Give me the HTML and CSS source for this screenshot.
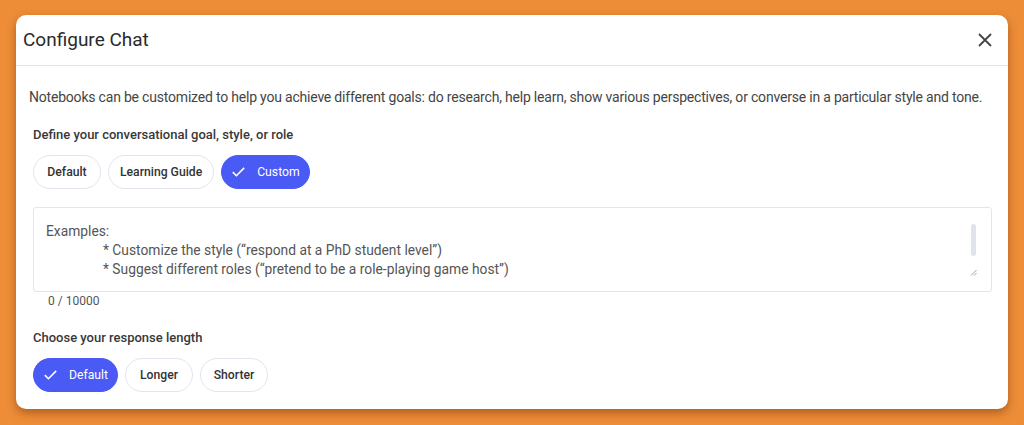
FILE: index.html
```html
<!DOCTYPE html>
<html lang="en">

<head>
    <meta charset="UTF-8">
    <meta name="viewport" content="width=device-width, initial-scale=1.0">
    <title>Configure Chat</title>
    <link rel="stylesheet" href="styles.css">
</head>

<body>

    <div class="dialog">
        <div class="dialog-head">
            <h1>Configure Chat</h1>
            <span class="close">
                <svg width="14" height="14" viewBox="0 0 14 14">
                    <path d="M1 1L13 13M13 1L1 13" stroke="#444" stroke-width="1.8" fill="none" />
                </svg>
            </span>
        </div>

        <div class="dialog-body">
            <p class="intro">Notebooks can be customized to help you achieve different goals: do research, help learn, show various perspectives, or converse in a particular style and tone.</p>

            <p class="label">Define your conversational goal, style, or role</p>
            <div class="chips">
                <span class="chip">Default</span>
                <span class="chip">Learning Guide</span>
                <span class="chip on">
                    <svg width="13" height="10" viewBox="0 0 13 10">
                        <path d="M0.8 5.1L4.4 8.7L12.2 0.9" stroke="#fff" stroke-width="1.6" fill="none" />
                    </svg>
                    Custom
                </span>
            </div>

            <div class="prompt">
                <div class="prompt-text">
                    <div>Examples:</div>
                    <div class="indent">* Customize the style (“respond at a PhD student level”)</div>
                    <div class="indent">* Suggest different roles (“pretend to be a role-playing game host”)</div>
                </div>
                <div class="scroll"></div>
                <svg class="grip" width="7" height="7" viewBox="0 0 7 7">
                    <path d="M6.5 1L1 6.5M6.5 4L4 6.5" stroke="#999" stroke-width="0.9" />
                </svg>
            </div>
            <p class="count">0 / 10000</p>

            <p class="label">Choose your response length</p>
            <div class="chips">
                <span class="chip on">
                    <svg width="13" height="10" viewBox="0 0 13 10">
                        <path d="M0.8 5.1L4.4 8.7L12.2 0.9" stroke="#fff" stroke-width="1.6" fill="none" />
                    </svg>
                    Default
                </span>
                <span class="chip">Longer</span>
                <span class="chip">Shorter</span>
            </div>
        </div>
    </div>

</body>

</html>
```

FILE: styles.css
```css
* {
    margin: 0;
    padding: 0;
    box-sizing: border-box;
}

body {
    width: 1024px;
    height: 425px;
    overflow: hidden;
    background-color: #ee8d37;
    font-family: Roboto, "Liberation Sans", Arial, sans-serif;
    color: #3c3c3c;
    padding: 15px 16px 0 16px;
}

.dialog {
    width: 992px;
    height: 394px;
    background-color: #fff;
    border-radius: 10px;
    box-shadow: 0 4px 10px rgba(90, 40, 0, 0.45);
}

.dialog-head {
    height: 51px;
    border-bottom: 1px solid #e3e3e6;
    display: flex;
    align-items: center;
    justify-content: space-between;
    padding: 0 16px 0 7px;
}

.dialog-head h1 {
    font-size: 19px;
    font-weight: 400;
    color: #2a2a2a;
    margin-top: -2px;
}

.close {
    display: flex;
    margin-top: -1px;
}

.dialog-body {
    padding: 0 16px 0 17px;
}

.intro {
    font-size: 14px;
    letter-spacing: -0.2px;
    color: #454545;
    margin: 21px 0 0 -4px;
    line-height: 20px;
    white-space: nowrap;
}

.label {
    font-size: 13px;
    font-weight: 500;
    color: #383838;
    margin-top: 20px;
    line-height: 16px;
}

.chips {
    display: flex;
    gap: 7px;
    margin-top: 12px;
}

.chip {
    height: 34px;
    min-width: 68px;
    padding: 0 11px;
    border: 1px solid #e4e4ee;
    border-radius: 17px;
    font-size: 12.2px;
    font-weight: 500;
    color: #333;
    display: flex;
    align-items: center;
    justify-content: center;
    gap: 12px;
}

.chip.on {
    background-color: #4a5af4;
    border-color: #4a5af4;
    color: #fff;
    font-weight: 400;
    padding: 0 9px 0 10px;
}

.prompt {
    margin-top: 18px;
    height: 85px;
    border: 1px solid #e4e4ea;
    border-radius: 3px;
    position: relative;
    padding: 14px 12px 0 12px;
}

.prompt-text {
    font-size: 13.8px;
    color: #555;
    line-height: 19px;
}

.indent {
    padding-left: 57px;
}

.scroll {
    position: absolute;
    right: 15px;
    top: 16px;
    width: 5px;
    height: 32px;
    border-radius: 3px;
    background-color: #e1e3ec;
}

.grip {
    position: absolute;
    right: 14px;
    bottom: 15px;
}

.count {
    font-size: 12px;
    color: #555;
    margin: 2px 0 0 15px;
    line-height: 14px;
}

.count+.label {
    margin-top: 22px;
}
```
